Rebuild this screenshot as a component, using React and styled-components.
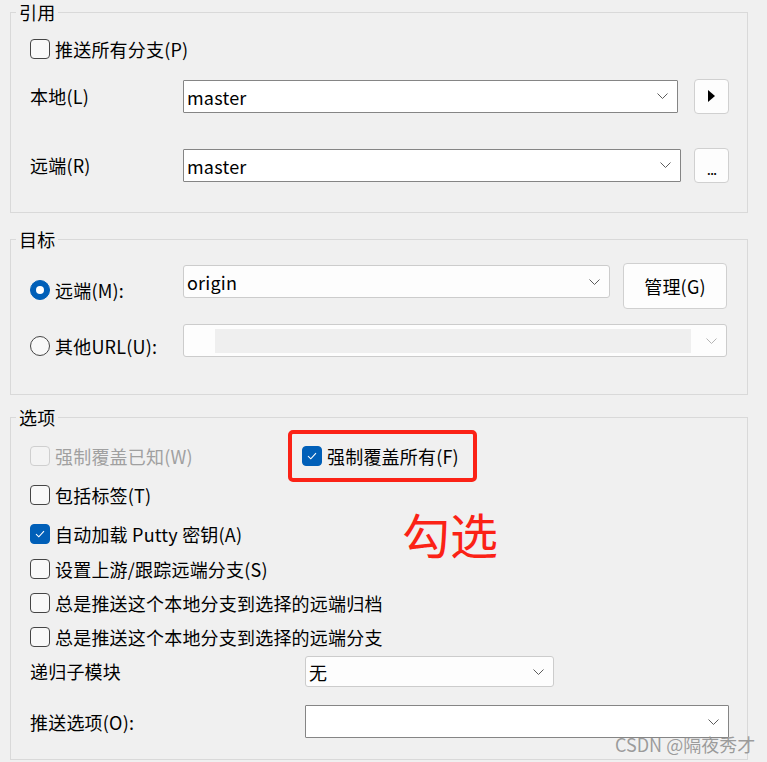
import React from 'react'
import styled, { createGlobalStyle } from 'styled-components'

const GlobalStyle = createGlobalStyle`
  html, body {
    margin: 0;
    padding: 0;
    background: #f0f0f0;
  }
  * {
    box-sizing: border-box;
  }
`

const Page = styled.div`
  position: relative;
  width: 767px;
  height: 762px;
  overflow: hidden;
  padding: 0 19px 0 10px;
  background: #f0f0f0;
  color: #000;
  font-family: 'Noto Sans CJK SC', 'Noto Sans', sans-serif;
  font-size: 18px;
  letter-spacing: 0.2px;
`

const Group = styled.fieldset`
  margin: ${({ top }) => top || 0}px 0 0 0;
  width: 738px;
  min-width: 0;
  padding: 0 18px ${({ bottom }) => bottom}px 5px;
  border: 1px solid #d9d9d9;
`

const Legend = styled.legend`
  padding: 0 3px;
  line-height: 24px;
  font-size: 18px;
`

const Content = styled.div`
  padding-top: ${({ top }) => top}px;
  padding-left: 14px;
`

const Row = styled.div`
  display: flex;
  align-items: ${({ align }) => align || 'center'};
  margin-top: ${({ mt }) => mt || 0}px;
  height: ${({ h }) => (h ? `${h}px` : 'auto')};
`

const Label = styled.div`
  width: ${({ w }) => w}px;
  flex: none;
  line-height: 30px;
  white-space: nowrap;
  margin-top: ${({ mt }) => mt || 0}px;
`

const Check = styled.label`
  display: flex;
  align-items: center;
  gap: 5px;
  height: 30px;
  white-space: nowrap;
  color: ${({ disabled }) => (disabled ? '#a0a0a0' : '#000')};
  width: ${({ w }) => (w ? `${w}px` : 'auto')};
  flex: none;
  margin-top: ${({ mt }) => mt || 0}px;
`

const Box = styled.span`
  width: 20px;
  height: 20px;
  flex: none;
  border-radius: 4px;
  display: flex;
  align-items: center;
  justify-content: center;
  border: 1px solid
    ${({ checked, disabled }) => (checked ? '#005fb8' : disabled ? '#cfcfcf' : '#454545')};
  background: ${({ checked, disabled }) => (checked ? '#005fb8' : disabled ? '#f3f3f3' : '#f8f8f8')};
`

const RadioDot = styled.span`
  width: 20px;
  height: 20px;
  flex: none;
  border-radius: 50%;
  display: flex;
  align-items: center;
  justify-content: center;
  border: 1px solid ${({ checked }) => (checked ? '#005fb8' : '#454545')};
  background: ${({ checked }) => (checked ? '#005fb8' : '#f8f8f8')};

  &::after {
    content: '';
    display: ${({ checked }) => (checked ? 'block' : 'none')};
    width: 8px;
    height: 8px;
    border-radius: 50%;
    background: #fff;
  }
`

const Combo = styled.div`
  display: flex;
  align-items: center;
  flex: none;
  width: ${({ w }) => w}px;
  height: ${({ h }) => h || 33}px;
  margin-top: ${({ mt }) => mt || 0}px;
  padding: 0 9px 0 3px;
  background: ${({ light }) => (light ? '#fdfdfd' : '#fff')};
  border: 1px solid ${({ light }) => (light ? '#cccccc' : '#858585')};
  border-radius: ${({ light }) => (light ? 3 : 1)}px;
  font-size: 18px;
`

const ComboText = styled.span`
  flex: 1;
  line-height: 30px;
  padding-top: 1px;
`

const DisabledField = styled.span`
  flex: 1;
  align-self: stretch;
  margin: 4px 15px 3px 28px;
  background: #efefef;
`

const Button = styled.div`
  flex: none;
  display: flex;
  align-items: center;
  justify-content: center;
  width: ${({ w }) => w}px;
  height: ${({ h }) => h}px;
  margin-left: ${({ ml }) => ml}px;
  background: #fdfdfd;
  border: 1px solid #d0d0d0;
  border-radius: 4px;
  font-size: 18px;
`

const Dots = styled.span`
  font-size: 15px;
  line-height: 1;
  margin-top: 6px;
  letter-spacing: -1px;
`

const Highlight = styled.div`
  display: flex;
  margin: -11px 0 -11px -14px;
  padding: 7px 14px 7px 10px;
  border: 4px solid #fb2216;
  border-radius: 5px;
`

const Note = styled.div`
  position: absolute;
  left: 402px;
  top: 503px;
  font-size: 48px;
  line-height: 60px;
  letter-spacing: 0;
  color: #fb2216;
`

const Watermark = styled.div`
  position: absolute;
  left: 615px;
  top: 729px;
  font-size: 18px;
  line-height: 30px;
  letter-spacing: 0;
  color: rgba(140, 140, 140, 0.85);
  white-space: nowrap;
`

const Chevron = ({ muted }) => (
  <svg width="11" height="6" viewBox="0 0 11 6" style={{ flex: 'none' }}>
    <polyline
      points="0.5,0.5 5.5,5.5 10.5,0.5"
      fill="none"
      stroke={muted ? '#b4b4b4' : '#5c5c5c'}
      strokeWidth="1"
    />
  </svg>
)

const Tick = () => (
  <svg width="10" height="8" viewBox="0 0 10 8">
    <polyline points="1,4.2 3.8,6.8 9,1.2" fill="none" stroke="#fff" strokeWidth="1.1" />
  </svg>
)

const CheckItem = ({ checked, disabled, w, mt, children }) => (
  <Check disabled={disabled} w={w} mt={mt}>
    <Box checked={checked} disabled={disabled}>
      {checked && <Tick />}
    </Box>
    {children}
  </Check>
)

const RadioItem = ({ checked, children, mt }) => (
  <Check w={153} mt={mt}>
    <RadioDot checked={checked} />
    {children}
  </Check>
)

export default function App() {
  return (
    <Page>
      <GlobalStyle />

      <Group bottom={29}>
        <Legend>引用</Legend>
        <Content top={10}>
          <CheckItem>推送所有分支(P)</CheckItem>
          <Row mt={14} h={36}>
            <Label w={153}>本地(L)</Label>
            <Combo w={495}>
              <ComboText>master</ComboText>
              <Chevron />
            </Combo>
            <Button w={35} h={35} ml={16}>
              <svg width="7" height="12" viewBox="0 0 7 12">
                <polygon points="0,0 7,6 0,12" fill="#000" />
              </svg>
            </Button>
          </Row>
          <Row mt={33} h={36}>
            <Label w={153}>远端(R)</Label>
            <Combo w={498}>
              <ComboText>master</ComboText>
              <Chevron />
            </Combo>
            <Button w={35} h={35} ml={13}>
              <Dots>...</Dots>
            </Button>
          </Row>
        </Content>
      </Group>

      <Group top={14} bottom={33}>
        <Legend>目标</Legend>
        <Content top={12}>
          <Row align="flex-start">
            <RadioItem checked mt={12}>
              远端(M):
            </RadioItem>
            <Combo w={427} mt={2} light>
              <ComboText>origin</ComboText>
              <Chevron />
            </Combo>
            <Button w={104} h={46} ml={13}>
              管理(G)
            </Button>
          </Row>
          <Row align="flex-start" mt={15}>
            <RadioItem mt={7}>其他URL(U):</RadioItem>
            <Combo w={544} light>
              <DisabledField />
              <Chevron muted />
            </Combo>
          </Row>
        </Content>
      </Group>

      <Group top={10} bottom={21}>
        <Legend>选项</Legend>
        <Content top={12}>
          <Row>
            <CheckItem disabled w={272}>
              强制覆盖已知(W)
            </CheckItem>
            <Highlight>
              <CheckItem checked>强制覆盖所有(F)</CheckItem>
            </Highlight>
          </Row>
          <CheckItem mt={9}>包括标签(T)</CheckItem>
          <CheckItem checked mt={9}>
            自动加载 Putty 密钥(A)
          </CheckItem>
          <CheckItem mt={5}>设置上游/跟踪远端分支(S)</CheckItem>
          <CheckItem mt={4}>总是推送这个本地分支到选择的远端归档</CheckItem>
          <CheckItem mt={4}>总是推送这个本地分支到选择的远端分支</CheckItem>
          <Row mt={4}>
            <Label w={275} mt={-2}>
              递归子模块
            </Label>
            <Combo w={249} h={31} light>
              <ComboText>无</ComboText>
              <Chevron />
            </Combo>
          </Row>
          <Row mt={18}>
            <Label w={275}>推送选项(O):</Label>
            <Combo w={424}>
              <ComboText />
              <Chevron />
            </Combo>
          </Row>
        </Content>
      </Group>

      <Note>勾选</Note>
      <Watermark>CSDN @隔夜秀才</Watermark>
    </Page>
  )
}
